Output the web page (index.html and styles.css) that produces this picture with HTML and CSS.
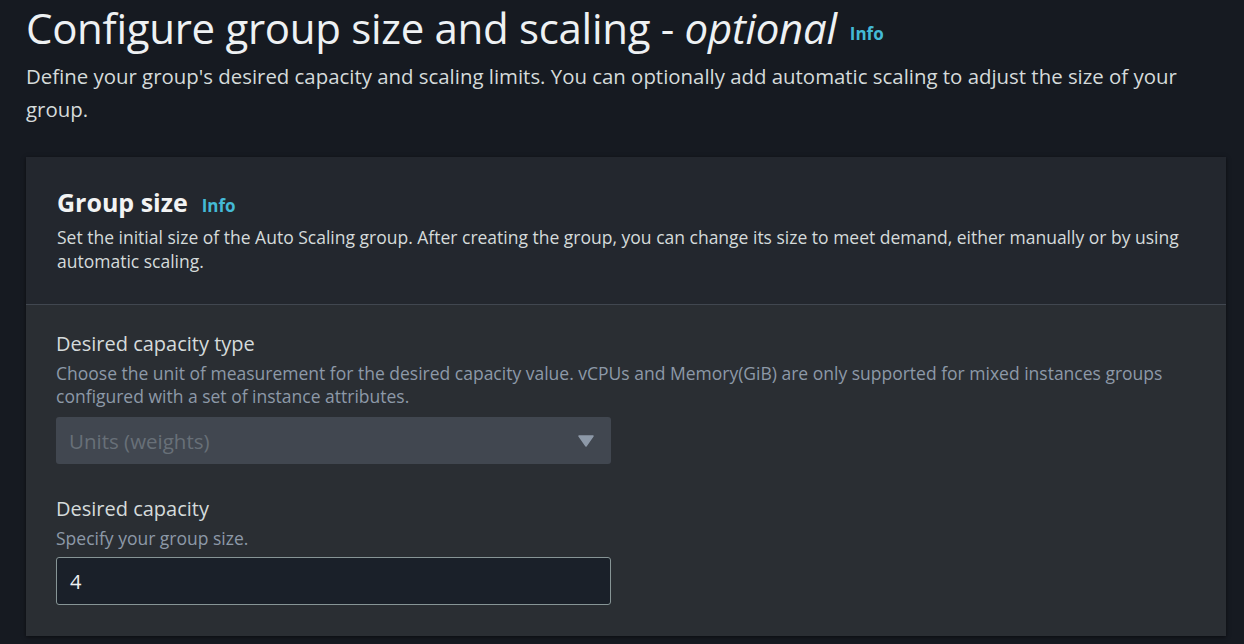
FILE: index.html
```html
<!DOCTYPE html>
<html lang="en">
<head>
<meta charset="utf-8">
<title>Configure group size and scaling</title>
<link rel="stylesheet" href="styles.css">
</head>
<body>
<main class="page">
  <header class="page-header">
    <h1 class="page-title">Configure group size and scaling - <em>optional</em><a class="info info-lg" href="#">Info</a></h1>
    <p class="page-desc">Define your group's desired capacity and scaling limits. You can optionally add automatic scaling to adjust the size of your group.</p>
  </header>

  <section class="card">
    <div class="card-header">
      <h2 class="card-title">Group size<a class="info" href="#">Info</a></h2>
      <p class="card-desc">Set the initial size of the Auto Scaling group. After creating the group, you can change its size to meet demand, either manually or by using automatic scaling.</p>
    </div>
    <div class="card-body">
      <div class="field">
        <label class="field-label">Desired capacity type</label>
        <p class="field-desc">Choose the unit of measurement for the desired capacity value. vCPUs and Memory(GiB) are only supported for mixed instances groups configured with a set of instance attributes.</p>
        <div class="select is-disabled">
          <span class="select-value">Units (weights)</span>
          <svg class="caret" width="16" height="12" viewBox="0 0 16 12"><path d="M1 1 H15 L8 11 Z" fill="currentColor" stroke="currentColor" stroke-width="1.5" stroke-linejoin="round"/></svg>
        </div>
      </div>
      <div class="field">
        <label class="field-label">Desired capacity</label>
        <p class="field-desc">Specify your group size.</p>
        <div class="input"><span>4</span></div>
      </div>
    </div>
  </section>
</main>
</body>
</html>
```
FILE: styles.css
```css
* { box-sizing: border-box; }
html, body { margin: 0; padding: 0; }
body {
  background: #161a21;
  color: #d5dbdb;
  font-family: "Open Sans", "Noto Sans", sans-serif;
  width: 1244px;
  height: 644px;
  overflow: hidden;
}
.page {
  padding: 0 18px 0 26px;
}
.page-title {
  margin: 0;
  font-size: 42px;
  font-weight: 400;
  line-height: 56px;
  color: #eef1f3;
  letter-spacing: -0.3px;
}
.page-title em { font-style: italic; }
.info {
  color: #44b9d6;
  text-decoration: none;
  font-weight: 700;
  font-size: 17px;
  line-height: 1;
  margin-left: 14px;
  letter-spacing: 0;
}
.info-lg { margin-left: 13px; position: relative; top: -4px; }
.page-desc {
  margin: 4px 0 0;
  font-size: 20.4px;
  line-height: 33px;
  color: #d5dbdb;
}
.card {
  margin-top: 31px;
  background: #2a2e33;
  box-shadow: 0 1px 4px rgba(0,0,0,0.55);
}
.card-header {
  background: #23272e;
  padding: 27px 31px 31px;
  border-bottom: 1px solid #414750;
}
.card-title {
  margin: 0;
  font-size: 25px;
  font-weight: 700;
  line-height: 36px;
  color: #f2f3f3;
}
.card-desc {
  margin: 5px 0 0;
  font-size: 17.5px;
  line-height: 24px;
  color: #d5dbdb;
}
.card-body {
  padding: 25px 30px 31px;
}
.field + .field { margin-top: 31px; }
.field-label {
  display: block;
  font-size: 20px;
  line-height: 28px;
  color: #d5dbdb;
}
.field-desc {
  margin: 4px 0 0;
  font-size: 17.5px;
  line-height: 23px;
  color: #8d99a8;
}
.select, .input {
  width: 555px;
  height: 47px;
  border-radius: 3px;
  display: flex;
  align-items: center;
  padding: 0 13px;
  font-size: 20.5px;
}
.select {
  margin-top: 9px;
  background: #414750;
  color: #687078;
  justify-content: space-between;
  padding-right: 17px;
}
.caret { color: #8d99a8; }
.input {
  margin-top: 7px;
  height: 48px;
  background: #1a2029;
  border: 1px solid #879596;
  color: #eef1f3;
  font-size: 20px;
}
```
